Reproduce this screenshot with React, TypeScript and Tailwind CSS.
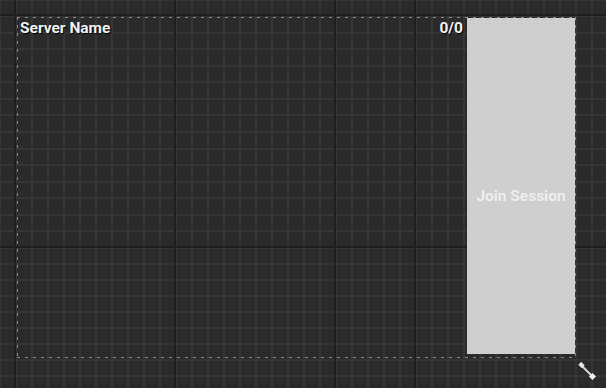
import React from "react";

const W = 606;
const H = 388;

function GridCanvas() {
  const vMinor: number[] = [];
  for (let x = -1; x <= W; x += 16) vMinor.push(x);
  const vMajor = [15, 175, 335, 415];
  const hMinor: number[] = [];
  for (let k = 0; k <= 14; k++) hMinor.push(Math.round(15 + k * 16.57));
  for (let y = 263; y <= H; y += 16) hMinor.push(y);
  hMinor.push(-1);
  const hMajor = [15, 247];
  return (
    <svg width={W} height={H} className="col-start-1 row-start-1 block" aria-hidden>
      <rect width={W} height={H} fill="#2a2a2a" />
      {vMinor.map((x) => (
        <rect key={"vm" + x} x={x} y={0} width={2} height={H} fill="#363636" />
      ))}
      {hMinor.map((y) => (
        <rect key={"hm" + y} x={0} y={y} width={W} height={2} fill="#353535" />
      ))}
      {vMajor.map((x) => (
        <rect key={"vM" + x} x={x - 1} y={0} width={2} height={H} fill="#1e1e1e" />
      ))}
      {hMajor.map((y) => (
        <rect key={"hM" + y} x={0} y={y - 1} width={W} height={2} fill="#1e1e1e" />
      ))}
    </svg>
  );
}

export default function App() {
  return (
    <div
      className="grid w-[606px] h-[388px] overflow-hidden bg-[#2a2a2a]"
      style={{ fontFamily: "Roboto, 'Liberation Sans', Arial, sans-serif" }}
    >
      <GridCanvas />
      <div className="col-start-1 row-start-1 pl-[17px] pt-[17px] flex flex-col">
        <div className="w-[559px] h-[341px] flex [background:repeating-linear-gradient(90deg,#8a8a8a_0_3px,transparent_3px_8px)_left_top/100%_1px_no-repeat,repeating-linear-gradient(90deg,#8a8a8a_0_3px,transparent_3px_8px)_left_bottom/100%_1px_no-repeat,repeating-linear-gradient(180deg,#8a8a8a_0_3px,transparent_3px_8px)_left_top/1px_100%_no-repeat,repeating-linear-gradient(180deg,#8a8a8a_0_3px,transparent_3px_8px)_right_top/1px_100%_no-repeat]">
          <div className="flex-1 flex items-start justify-between pl-[3px] pr-[4px] pt-[2px]">
            <span className="text-[15.5px] leading-[18px] font-bold text-[#f2f2f2] [text-shadow:1px_1px_1px_#000]">
              Server Name
            </span>
            <span className="text-[15.5px] leading-[18px] font-bold text-[#f2f2f2] [text-shadow:1px_1px_1px_#000]">
              0/0
            </span>
          </div>
          <div className="w-[108px] mt-[1px] mb-[4px] mr-[1px] bg-[#cfcfcf] flex justify-center pt-[169px]">
            <span className="text-[15.5px] leading-[18px] font-semibold text-[#f0f0f0]">
              Join Session
            </span>
          </div>
        </div>
        <div className="flex justify-end w-[579px] mt-[4px]">
          <svg width="18" height="18" viewBox="0 0 18 18" aria-hidden>
            <line x1="3" y1="3" x2="15" y2="15" stroke="#d8d8d8" strokeWidth="2" />
            <rect x="1" y="1" width="5" height="4" fill="#e6e6e6" transform="rotate(45 3.5 3)" />
            <rect x="12" y="12" width="5" height="5" fill="#eeeeee" transform="rotate(45 14.5 14.5)" />
          </svg>
        </div>
      </div>
    </div>
  );
}
